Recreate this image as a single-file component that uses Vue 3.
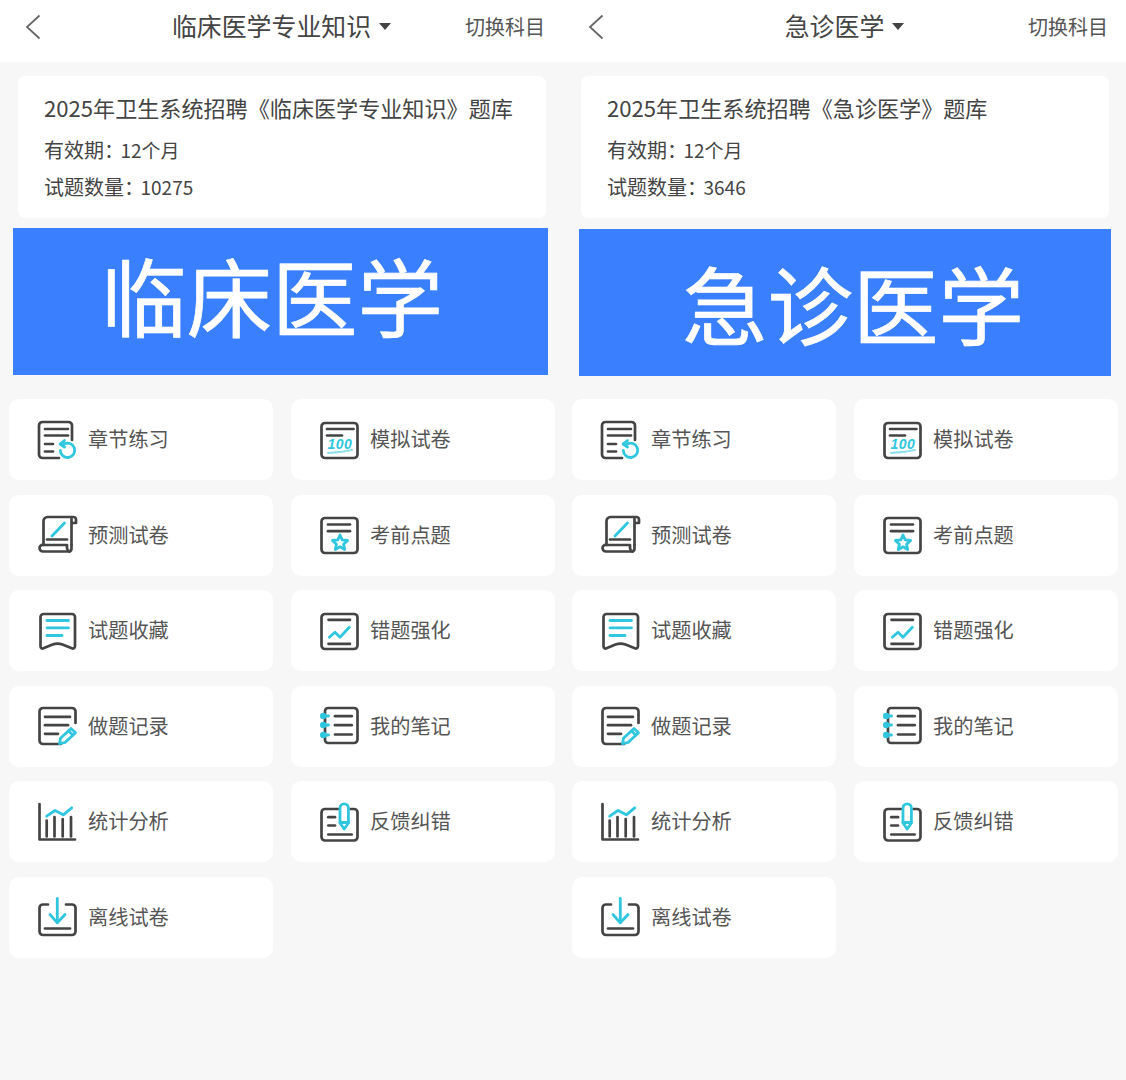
<script setup>
const box = 'M5 2h29a3.500 3.500 0 0 1 3.500 3.500v28a3.500 3.500 0 0 1-3.500 3.500H5a3.500 3.500 0 0 1-3.500-3.500v-28A3.500 3.500 0 0 1 5 2z'

const tiles = [
  {
    name: '章节练习',
    dark: ['M21 37H4.500A3.500 3.500 0 0 1 1 33.500v-29A3.500 3.500 0 0 1 4.500 1h26A3.500 3.500 0 0 1 34 4.500V19', 'M7 8h23', 'M7 14.500h23', 'M7 23h8', 'M7 30.500h8'],
    cyan: ['M26 23a7.200 7.200 0 1 1-3.700 6.500', 'M26.500 19.500l-4.500 3.500 4.500 3']
  },
  {
    name: '模拟试卷',
    dark: [box, 'M7 8h26.500', 'M7 14.500h15'],
    soft: ['M8 32c8-.6 16-1.200 24-3'],
    label: '100'
  },
  {
    name: '预测试卷',
    dark: ['M5.500 29V5a4 4 0 0 1 4-4h26a2.500 2.500 0 0 1 2.500 2.500V7h-4.500M33.500 3v26', 'M5 29h24v2a4 4 0 0 0 3 4.500H5a3.500 3.500 0 0 1-3.500-3.500A3 3 0 0 1 5 29z', 'M9 23.500h20', 'M33.500 29v3.500a3 3 0 0 1-2.500 3'],
    cyan: ['M14 20L26.500 7']
  },
  {
    name: '考前点题',
    dark: [box, 'M8 8.500h22', 'M8 15.200h22'],
    cyan: ['M20 19L22.200 23.900L27.600 24.500L23.600 28.200L24.700 33.500L20 30.800L15.300 33.500L16.400 28.200L12.400 24.500L17.800 23.900Z']
  },
  {
    name: '试题收藏',
    dark: ['M2.500 34V5a3 3 0 0 1 3-3H34a3 3 0 0 1 3 3v29c0 2-1.500 3-3.200 2.300l-9.300-3.700c-3.200-1.200-6.800-1.200-10 0l-9 3.700C3.800 37 2.500 36 2.500 34z'],
    cyan: ['M9 8.500h21.500', 'M9 15.800h21.500', 'M9 23.500h15']
  },
  {
    name: '错题强化',
    dark: [box, 'M8.500 7.800h21.500', 'M8.500 31.800h21.500'],
    cyan: ['M9.300 25.200L15 20.200L20 25.200L29.300 15.200']
  },
  {
    name: '做题记录',
    dark: ['M23 37H5a3.500 3.500 0 0 1-3.500-3.500v-29A3.500 3.500 0 0 1 5 1h29a3.500 3.500 0 0 1 3.500 3.500V16', 'M7 9.800h25', 'M7 18.200h23', 'M7 26.800h13'],
    cyan: ['M33 21.500l4.500 4.200-10.500 9.800-5.500 1.200 1-5.500z', 'M30.500 24l4.300 4']
  },
  {
    name: '我的笔记',
    dark: ['M8 1h26a3.500 3.500 0 0 1 3.500 3.500v28a3.500 3.500 0 0 1-3.500 3.500H8a3 3 0 0 1-3-3V4a3 3 0 0 1 3-3z', 'M15 9.200h16.700', 'M15 18.200h16.700', 'M15 27.500h16.700'],
    rings: [9, 18, 28]
  },
  {
    name: '统计分析',
    dark: ['M1.500 1v35.500H37', 'M8.700 17.500v16', 'M16.500 14v19.500', 'M24.700 16v17.500', 'M33 14v19.500'],
    cyan: ['M8.700 13.200L17 7.500L25.300 11.800L33.700 4.800']
  },
  {
    name: '反馈纠错',
    dark: ['M18 6H5a3.500 3.500 0 0 0-3.500 3.500V34A3.500 3.500 0 0 0 5 37.500h29a3.500 3.500 0 0 0 3.500-3.500V9.500A3.500 3.500 0 0 0 34 6h-3.500', 'M8.300 14.200H15', 'M8.300 22.500H15', 'M8.300 31.500h23.400'],
    cyan: ['M20 5a4.200 4.200 0 0 1 8.400 0v15l-4.200 6-4.200-6z', 'M20 19.500h8.400']
  },
  {
    name: '离线试卷',
    dark: ['M10 6.500H5A3.500 3.500 0 0 0 1.500 10v23.500A3.500 3.500 0 0 0 5 37h29a3.500 3.500 0 0 0 3.500-3.500V10A3.500 3.500 0 0 0 34 6.500h-6', 'M7 30.500h25'],
    cyan: ['M19.300 .5v24', 'M12 16.500l7.300 8.300 7.700-8.300']
  }
]

const panels = [
  { id: 'a', subject: '临床医学专业知识', banner: '临床医学', count: '10275' },
  { id: 'b', subject: '急诊医学', banner: '急诊医学', count: '3646' }
]
</script>

<template>
  <div class="page">
    <section v-for="p in panels" :key="p.id" class="panel" :class="'panel-' + p.id">
      <header class="bar">
        <svg class="back" viewBox="0 0 16 26" width="16" height="26">
          <path d="M14.500 1.500L2 13l12.500 11.500" />
        </svg>
        <div class="subject">
          <span>{{ p.subject }}</span>
          <i class="caret"></i>
        </div>
        <span class="switch">切换科目</span>
      </header>

      <div class="info">
        <div class="info-title">2025年卫生系统招聘《{{ p.subject }}》题库</div>
        <div class="info-row">有效期<span class="colon">：</span><span class="value">12个月</span></div>
        <div class="info-row">试题数量<span class="colon">：</span><span class="value">{{ p.count }}</span></div>
      </div>

      <div class="banner">{{ p.banner }}</div>

      <div class="grid">
        <div v-for="t in tiles" :key="t.name" class="tile">
          <svg class="icon" viewBox="0 0 39 38" width="39" height="38">
            <path v-for="d in t.dark" :key="d" class="dark" :d="d" />
            <path v-for="d in t.cyan || []" :key="d" class="cyan" :d="d" />
            <path v-for="d in t.soft || []" :key="d" class="soft" :d="d" />
            <text v-if="t.label" class="hundred" x="7.500" y="28">{{ t.label }}</text>
            <g v-for="y in t.rings || []" :key="y">
              <circle class="ring-dot" cx="3.200" :cy="y" r="3.200" />
              <path class="cyan" :d="`M3.500 ${y}h5`" />
            </g>
          </svg>
          <span class="tile-name">{{ t.name }}</span>
        </div>
      </div>
    </section>
  </div>
</template>

<style>
body {
  background: #f7f7f7;
}
</style>

<style scoped>
.page {
  display: flex;
  width: 1126px;
  height: 1080px;
  overflow: hidden;
  background: #f7f7f7;
  font-family: "Noto Sans CJK SC", "Noto Sans", sans-serif;
}
.panel {
  width: 563px;
  flex: none;
}
.bar {
  display: grid;
  grid-template-columns: 1fr auto 1fr;
  align-items: center;
  height: 62px;
  padding: 0 18px 8px;
  box-sizing: border-box;
  background: #fff;
  color: #444;
}
.back {
  margin-left: 7px;
  fill: none;
  stroke: #666;
  stroke-width: 1.800;
}
.subject {
  display: flex;
  align-items: center;
  gap: 8px;
  margin-bottom: 4px;
  font-size: 24.900px;
  line-height: 36px;
}
.caret {
  width: 0;
  height: 0;
  margin-top: 2px;
  border-left: 6px solid transparent;
  border-right: 6px solid transparent;
  border-top: 7px solid #444;
}
.switch {
  justify-self: end;
  margin-bottom: 2px;
  font-size: 20px;
  color: #555;
}
.info {
  margin: 14px 17px 0 18px;
  height: 142px;
  box-sizing: border-box;
  padding: 12px 26px 0;
  background: #fff;
  border-radius: 7px;
  color: #444;
}
.info-title {
  font-size: 22.100px;
  line-height: 38px;
  margin-bottom: 5px;
  white-space: nowrap;
}
.info-row {
  font-size: 20px;
  line-height: 37px;
}
.colon {
  letter-spacing: -3.500px;
}
.value {
  font-size: 19px;
}
.banner {
  display: flex;
  align-items: center;
  height: 147px;
  margin: 10px 15px 24px 13px;
  box-sizing: border-box;
  background: #3a80fe;
  color: #fff;
  font-size: 85.500px;
  -webkit-text-stroke: .7px #fff;
  line-height: 1;
  white-space: nowrap;
}
.panel-a .banner {
  padding: 0 0 13px 88px;
}
.panel-b .banner {
  margin: 11px 15px 23px 16px;
  padding: 0 0 0 103px;
}
.grid {
  display: grid;
  grid-template-columns: 264px 264px;
  grid-auto-rows: 81px;
  column-gap: 18px;
  row-gap: 14.500px;
  padding-left: 9px;
}
.tile {
  display: flex;
  align-items: center;
  gap: 11px;
  padding-left: 29px;
  background: #fff;
  border-radius: 10px;
}
.tile-name {
  margin-bottom: 2px;
  font-size: 20.200px;
  color: #555;
}
.icon {
  flex: none;
  overflow: visible;
  fill: none;
  stroke-linecap: round;
  stroke-linejoin: round;
}
.dark {
  stroke: #444;
  stroke-width: 2.700;
}
.cyan {
  stroke: #2fc6de;
  stroke-width: 2.800;
}
.soft {
  stroke: #8fe0ec;
  stroke-width: 2;
}
.ring-dot {
  fill: #2fc6de;
}
.hundred {
  fill: #2fc6de;
  font-family: "Liberation Sans", sans-serif;
  font-size: 14px;
  font-style: italic;
  font-weight: 700;
  letter-spacing: .5px;
}
</style>
